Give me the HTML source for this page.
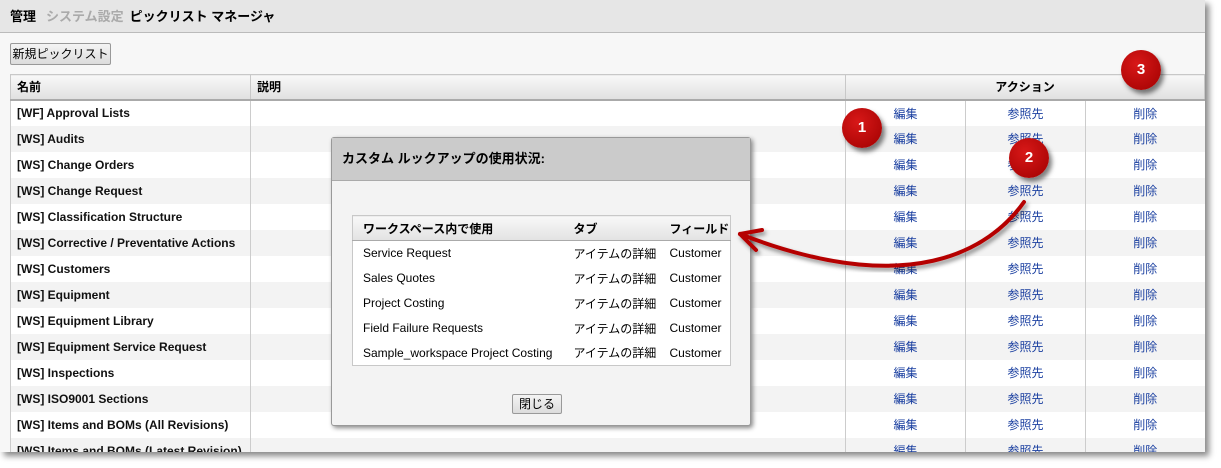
<!DOCTYPE html>
<html><head><meta charset="utf-8"><style>
body{margin:0;width:1221px;height:468px;background:#fff;position:relative;overflow:hidden;font-family:"Liberation Sans","Noto Sans CJK JP",sans-serif;font-size:12px;color:#000}
#page{position:absolute;left:0;top:0;width:1205px;height:452px;background:#f7f7f7;overflow:hidden;box-shadow:4px 4px 6px #888}
.hdr{position:absolute;left:0;top:0;width:1205px;height:32px;background:#e6e6e6;border-bottom:1px solid #bbb;font-weight:bold;font-size:13px;line-height:33px}
.btn{position:absolute;background:linear-gradient(#f4f4f4,#dcdcdc);border:1px solid #999;border-radius:2px;font-size:12px;text-align:center}
table{border-collapse:collapse}
#main{position:absolute;left:10px;top:74px;width:1195px;background:#fff}
#main th{height:25px;box-sizing:border-box;background:linear-gradient(#f8f8f8,#e0e0e0);border:1px solid #c8c8c8;border-bottom:2px solid #aaa;font-weight:bold;text-align:left;padding:0 6px;font-size:12px}
#main td{height:26px;box-sizing:border-box;padding:0 6px;font-weight:bold;font-size:12px;color:#111;border-left:1px solid #ccc}
#main tr:nth-child(odd) td{background:#f3f3f3}
#main td.a{text-align:center;font-weight:normal;color:#1a3fa0}
#modal{position:absolute;left:331px;top:137px;width:418px;height:287px;background:#f3f3f3;border:1px solid #999;border-radius:3px;box-shadow:2px 2px 5px #888}
#modal .mh{height:42px;background:#cbcbcb;border-bottom:1px solid #aaa;font-weight:bold;font-size:13px;line-height:42px;padding-left:10px}
#inner{position:absolute;left:20px;top:77px;width:379px;border:1px solid #c8c8c8;background:#fff;table-layout:fixed}
#inner th{height:25px;box-sizing:border-box;white-space:nowrap;background:linear-gradient(#f8f8f8,#e2e2e2);border-bottom:1px solid #aaa;text-align:left;padding:0 0 0 10px;font-size:12px;overflow:hidden}
#inner td{height:25px;box-sizing:border-box;padding:0 0 0 10px;font-size:12px;white-space:nowrap;overflow:hidden}
#inner .l{padding-left:4px}
.c{position:absolute;width:40px;height:40px;border-radius:50%;background:radial-gradient(circle at 40% 35%,#d81818,#a00000);color:#fff;font-weight:bold;font-size:15px;text-align:center;line-height:40px;box-shadow:3px 4px 5px rgba(0,0,0,.5)}
</style></head><body>
<div id="page">
<div class="hdr"><span style="margin-left:10px">管理</span><span style="margin-left:10px;color:#aaa">システム設定</span><span style="margin-left:6px">ピックリスト マネージャ</span></div>
<div class="btn" style="left:10px;top:43px;width:99px;height:20px;line-height:20px">新規ピックリスト</div>
<table id="main">
<tr><th style="width:240px">名前</th><th style="width:595px">説明</th><th colspan="3" style="text-align:center">アクション</th></tr>
<tr><td>[WF] Approval Lists</td><td></td><td class="a" style="width:120px">編集</td><td class="a" style="width:120px">参照先</td><td class="a">削除</td></tr>
<tr><td>[WS] Audits</td><td></td><td class="a">編集</td><td class="a">参照先</td><td class="a">削除</td></tr>
<tr><td>[WS] Change Orders</td><td></td><td class="a">編集</td><td class="a">参照先</td><td class="a">削除</td></tr>
<tr><td>[WS] Change Request</td><td></td><td class="a">編集</td><td class="a">参照先</td><td class="a">削除</td></tr>
<tr><td>[WS] Classification Structure</td><td></td><td class="a">編集</td><td class="a">参照先</td><td class="a">削除</td></tr>
<tr><td>[WS] Corrective / Preventative Actions</td><td></td><td class="a">編集</td><td class="a">参照先</td><td class="a">削除</td></tr>
<tr><td>[WS] Customers</td><td></td><td class="a">編集</td><td class="a">参照先</td><td class="a">削除</td></tr>
<tr><td>[WS] Equipment</td><td></td><td class="a">編集</td><td class="a">参照先</td><td class="a">削除</td></tr>
<tr><td>[WS] Equipment Library</td><td></td><td class="a">編集</td><td class="a">参照先</td><td class="a">削除</td></tr>
<tr><td>[WS] Equipment Service Request</td><td></td><td class="a">編集</td><td class="a">参照先</td><td class="a">削除</td></tr>
<tr><td>[WS] Inspections</td><td></td><td class="a">編集</td><td class="a">参照先</td><td class="a">削除</td></tr>
<tr><td>[WS] ISO9001 Sections</td><td></td><td class="a">編集</td><td class="a">参照先</td><td class="a">削除</td></tr>
<tr><td>[WS] Items and BOMs (All Revisions)</td><td></td><td class="a">編集</td><td class="a">参照先</td><td class="a">削除</td></tr>
<tr><td>[WS] Items and BOMs (Latest Revision)</td><td></td><td class="a">編集</td><td class="a">参照先</td><td class="a">削除</td></tr>
</table>
<div id="modal"><div class="mh">カスタム ルックアップの使用状況:</div>
<table id="inner">
<colgroup><col style="width:211px"><col style="width:102px"><col></colgroup>
<tr><th>ワークスペース内で使用</th><th>タブ</th><th class="l">フィールド</th></tr>
<tr><td>Service Request</td><td>アイテムの詳細</td><td class="l">Customer</td></tr>
<tr><td>Sales Quotes</td><td>アイテムの詳細</td><td class="l">Customer</td></tr>
<tr><td>Project Costing</td><td>アイテムの詳細</td><td class="l">Customer</td></tr>
<tr><td>Field Failure Requests</td><td>アイテムの詳細</td><td class="l">Customer</td></tr>
<tr><td>Sample_workspace Project Costing</td><td>アイテムの詳細</td><td class="l">Customer</td></tr>
</table>
<div class="btn" style="left:180px;top:256px;width:48px;height:18px;line-height:18px">閉じる</div>
</div>
<svg style="position:absolute;left:0;top:0" width="1205" height="452">
<defs><filter id="s"><feDropShadow dx="2" dy="3" stdDeviation="2" flood-opacity=".45"/></filter></defs>
<g filter="url(#s)" fill="none" stroke="#b50000" stroke-width="4" stroke-linecap="round">
<path d="M1024 202 C 990 250, 910 300, 740 234"/>
<path d="M740 234 L762 230 M740 234 L756 250"/>
</g>
</svg>
<div class="c" style="left:842px;top:108px">1</div>
<div class="c" style="left:1009px;top:138px">2</div>
<div class="c" style="left:1121px;top:50px">3</div>
</div>
</body></html>
